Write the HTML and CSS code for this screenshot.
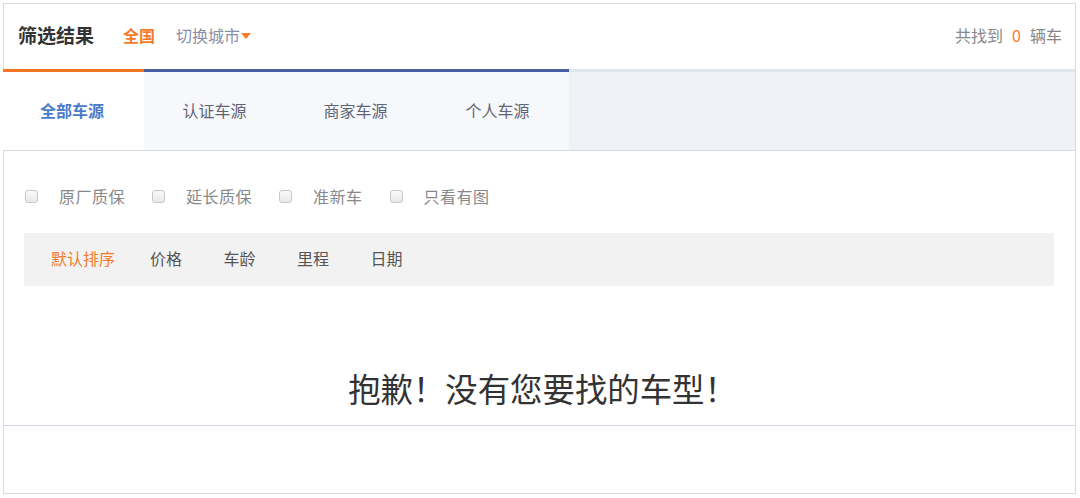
FILE: index.html
```html
<!DOCTYPE html>
<html lang="zh">
<head>
<meta charset="utf-8">
<link rel="stylesheet" href="styles.css">
</head>
<body>
<div class="panel">
  <div class="head">
    <div class="head-left">
      <span class="title">筛选结果</span>
      <span class="city">全国</span>
      <span class="switch">切换城市<span class="caret"></span></span>
    </div>
    <div class="count">共找到<span class="num">0</span>辆车</div>
  </div>
  <div class="tabs">
    <div class="tab active">全部车源</div>
    <div class="tab">认证车源</div>
    <div class="tab">商家车源</div>
    <div class="tab">个人车源</div>
    <div class="tab-rest"></div>
  </div>
  <div class="filters">
    <label class="check"><span class="box"></span>原厂质保</label>
    <label class="check"><span class="box"></span>延长质保</label>
    <label class="check"><span class="box"></span>准新车</label>
    <label class="check"><span class="box"></span>只看有图</label>
  </div>
  <div class="sortbar">
    <span class="sort on">默认排序</span>
    <span class="sort">价格</span>
    <span class="sort">车龄</span>
    <span class="sort">里程</span>
    <span class="sort">日期</span>
  </div>
  <div class="empty">抱歉！没有您要找的车型！</div>
  <div class="foot"></div>
</div>
</body>
</html>
```

FILE: styles.css
```css
* { box-sizing: border-box; }
html, body { margin: 0; padding: 0; background: #fff; }
body {
  font-family: "Noto Sans CJK SC", "Microsoft YaHei", sans-serif;
  font-size: 16px;
  color: #333;
}
.panel {
  margin: 3px 0 0 3px;
  width: 1073px;
  height: 491px;
  border: 1px solid #d6dbe4;
  display: flex;
  flex-direction: column;
}
.head {
  height: 65px;
  display: flex;
  align-items: center;
  justify-content: space-between;
  padding: 0 13px 4px 14px;
}
.head-left { display: flex; align-items: center; }
.title {
  font-size: 19px;
  font-weight: bold;
  color: #333;
}
.city {
  margin-left: 29px;
  color: #f47b2a;
  font-weight: bold;
  font-size: 16px;
}
.switch {
  margin-left: 21px;
  color: #8a90a6;
  display: flex;
  align-items: center;
}
.caret {
  width: 0;
  height: 0;
  border-left: 5px solid transparent;
  border-right: 5px solid transparent;
  border-top: 6px solid #f47b2a;
  margin-left: 1px;
  margin-top: 2px;
}
.count { color: #888; font-size: 16px; }
.num { color: #f47b2a; margin: 0 9px; }
.tabs {
  display: flex;
  height: 82px;
  margin-left: -1px;
  border-bottom: 1px solid #d6dbe4;
}
.tab {
  width: 141px;
  border-top: 3px solid #4a5f9f;
  background: #f7f8fb;
  display: flex;
  align-items: center;
  justify-content: center;
  padding-bottom: 2px;
  color: #5f6576;
  font-size: 16px;
}
.tab:nth-child(4) { width: 143px; }
.tab.active {
  border-top-color: #f47521;
  background: #fff;
  color: #4a7bcb;
  font-weight: bold;
  padding-right: 3px;
}
.tab-rest {
  flex: 1;
  border-top: 3px solid #e1e5ec;
  background: #eff2f6;
}
.filters {
  display: flex;
  align-items: center;
  height: 24px;
  margin-top: 33px;
  padding-left: 21px;
}
.check {
  display: flex;
  align-items: center;
  color: #888;
  font-size: 16px;
  letter-spacing: 0.5px;
  margin-right: 27px;
}
.box {
  width: 13px;
  height: 13px;
  border: 1px solid #c8c8c8;
  border-radius: 3px;
  background: linear-gradient(#fafafa, #e8e8e8);
  margin-right: 21px;
}
.sortbar {
  margin: 25px 21px 0 20px;
  height: 53px;
  background: #f2f2f2;
  display: flex;
  align-items: center;
  padding-left: 27px;
  padding-bottom: 3px;
  gap: 34px;
}
.sort { color: #555; font-size: 16px; }
.sort:first-child { margin-right: 1px; }
.sort:not(:first-child) { min-width: 39.5px; }
.sort.on { color: #f47b2a; }
.empty {
  height: 140px;
  padding-top: 79px;
  text-align: center;
  font-size: 32.4px;
  line-height: 46px;
  color: #333;
  padding-left: 6px;
  border-bottom: 1px solid #cfd4e8;
}
.foot { flex: 1; }
```
